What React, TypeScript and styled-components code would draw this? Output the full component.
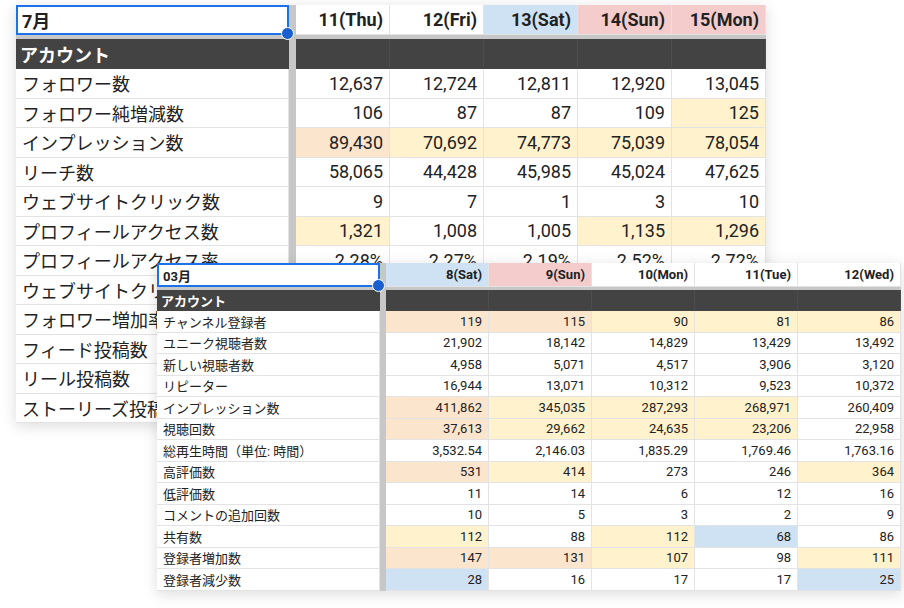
import React from 'react';
import styled, { createGlobalStyle } from 'styled-components';

const GlobalStyle = createGlobalStyle`
  body {
    margin: 0;
    background: #fff;
    font-family: Roboto, "Noto Sans CJK JP", sans-serif;
  }
`;

type Tone = 'o' | 'y' | 'b' | 'p' | '';
const tones: Record<string, string> = { o: '#fce5cd', y: '#fff2cc', b: '#cfe2f3', p: '#f4cccc', '': '#fff' };

interface SheetSize {
  label: number;
  div: number;
  col: number;
  head: number;
  band: number;
  acc: number;
  row: number;
  font: number;
}

const s = {
  Page: styled.div`
    position: relative;
    width: 904px;
    height: 608px;
    overflow: hidden;
    padding: 5px 0 0 16px;
    box-sizing: border-box;
  `,
  Sheet: styled.div<{ $z: SheetSize; $n: number }>`
    display: grid;
    grid-template-columns: ${(p) => `${p.$z.label}px ${p.$z.div}px repeat(5, ${p.$z.col}px)`};
    grid-template-rows: ${(p) => `${p.$z.head}px ${p.$z.band}px ${p.$z.acc}px repeat(${p.$n}, ${p.$z.row}px)`};
    width: max-content;
    background: #fff;
    font-size: ${(p) => p.$z.font}px;
    color: #222;
    box-shadow: 0 3px 14px rgba(0, 0, 0, 0.14);
  `,
  Overlay: styled.div`
    position: absolute;
    left: 157px;
    top: 263px;
  `,
  Cell: styled.div<{ $bg?: string; $right?: boolean; $bold?: boolean }>`
    display: flex;
    align-items: center;
    justify-content: ${(p) => (p.$right ? 'flex-end' : 'flex-start')};
    padding: 0 6px;
    background: ${(p) => p.$bg || '#fff'};
    border-right: 1px solid #e3e3e3;
    border-bottom: 1px solid #e3e3e3;
    font-weight: ${(p) => (p.$bold ? 700 : 400)};
    white-space: nowrap;
    overflow: hidden;
    box-sizing: border-box;
  `,
  Corner: styled.div`
    position: relative;
    display: flex;
    align-items: center;
    padding: 0 4px;
    border: 2px solid #1a73e8;
    font-weight: 700;
    background: #fff;
  `,
  Dot: styled.span`
    position: absolute;
    right: -7px;
    bottom: -7px;
    width: 11px;
    height: 11px;
    border-radius: 50%;
    background: #1a5fd0;
    border: 1px solid #fff;
    z-index: 2;
  `,
  Divider: styled.div`
    background: #c7c7c7;
  `,
  Band: styled.div`
    grid-column: 1 / -1;
    background: #c7c7c7;
  `,
  Dark: styled.div<{ $label?: boolean }>`
    display: flex;
    align-items: center;
    padding: 0 4px;
    background: #434343;
    color: #fff;
    font-weight: 700;
    border-right: ${(p) => (p.$label ? 'none' : '1px solid #4d4d4d')};
  `,
};

type Row = [string, [string, Tone][]];

const Sheet = ({ size, title, heads, rows }: { size: SheetSize; title: string; heads: [string, Tone][]; rows: Row[] }) => (
  <s.Sheet $z={size} $n={rows.length}>
    <s.Corner>
      {title}
      <s.Dot />
    </s.Corner>
    <s.Divider />
    {heads.map(([h, t]) => (
      <s.Cell key={h} $bg={tones[t]} $right $bold>
        {h}
      </s.Cell>
    ))}
    <s.Band />
    <s.Dark $label>アカウント</s.Dark>
    <s.Divider />
    {heads.map(([h]) => (
      <s.Dark key={h} />
    ))}
    {rows.map(([label, vals]) => (
      <React.Fragment key={label}>
        <s.Cell>{label}</s.Cell>
        <s.Divider />
        {vals.map(([v, t], i) => (
          <s.Cell key={i} $bg={tones[t]} $right>
            {v}
          </s.Cell>
        ))}
      </React.Fragment>
    ))}
  </s.Sheet>
);

const r = (label: string, ...vals: string[]): Row => [
  label,
  vals.map((v) => {
    const m = v.match(/^(.*?)([oybp])?$/)!;
    return [m[1], (m[2] || '') as Tone];
  }),
];

const bigRows: Row[] = [
  r('フォロワー数', '12,637', '12,724', '12,811', '12,920', '13,045'),
  r('フォロワー純増減数', '106', '87', '87', '109', '125y'),
  r('インプレッション数', '89,430o', '70,692y', '74,773y', '75,039y', '78,054y'),
  r('リーチ数', '58,065', '44,428', '45,985', '45,024', '47,625'),
  r('ウェブサイトクリック数', '9', '7', '1', '3', '10'),
  r('プロフィールアクセス数', '1,321y', '1,008', '1,005', '1,135y', '1,296y'),
  r('プロフィールアクセス率', '2.28%', '2.27%', '2.19%', '2.52%', '2.72%'),
  r('ウェブサイトクリック率', '0.07%', '0.06%', '0.01%', '0.02%', '0.08%'),
  r('フォロワー増加率', '0.84%', '0.68%', '0.68%', '0.85%', '0.96%'),
  r('フィード投稿数', '1', '1', '0', '1', '1'),
  r('リール投稿数', '0', '1', '1', '0', '1'),
  r('ストーリーズ投稿数', '3', '2', '4', '3', '2'),
];

const smallRows: Row[] = [
  r('チャンネル登録者', '119o', '115o', '90y', '81y', '86y'),
  r('ユニーク視聴者数', '21,902', '18,142', '14,829', '13,429', '13,492'),
  r('新しい視聴者数', '4,958', '5,071', '4,517', '3,906', '3,120'),
  r('リピーター', '16,944', '13,071', '10,312', '9,523', '10,372'),
  r('インプレッション数', '411,862o', '345,035y', '287,293y', '268,971y', '260,409'),
  r('視聴回数', '37,613o', '29,662y', '24,635y', '23,206y', '22,958'),
  r('総再生時間（単位: 時間）', '3,532.54', '2,146.03', '1,835.29', '1,769.46', '1,763.16'),
  r('高評価数', '531o', '414y', '273', '246', '364y'),
  r('低評価数', '11', '14', '6', '12', '16'),
  r('コメントの追加回数', '10', '5', '3', '2', '9'),
  r('共有数', '112y', '88', '112y', '68b', '86'),
  r('登録者増加数', '147o', '131o', '107y', '98', '111y'),
  r('登録者減少数', '28b', '16', '17', '17', '25b'),
];

const bigSize: SheetSize = { label: 273, div: 7, col: 94, head: 30, band: 4, acc: 30, row: 29.5, font: 18 };
const smallSize: SheetSize = { label: 223, div: 6, col: 103, head: 24, band: 3, acc: 21, row: 21.5, font: 13 };

const App = (): JSX.Element => (
  <s.Page>
    <GlobalStyle />
    <Sheet
      size={bigSize}
      title="7月"
      heads={[['11(Thu)', ''], ['12(Fri)', ''], ['13(Sat)', 'b'], ['14(Sun)', 'p'], ['15(Mon)', 'p']]}
      rows={bigRows}
    />
    <s.Overlay>
      <Sheet
        size={smallSize}
        title="03月"
        heads={[['8(Sat)', 'b'], ['9(Sun)', 'p'], ['10(Mon)', ''], ['11(Tue)', ''], ['12(Wed)', '']]}
        rows={smallRows}
      />
    </s.Overlay>
  </s.Page>
);

export default App;
